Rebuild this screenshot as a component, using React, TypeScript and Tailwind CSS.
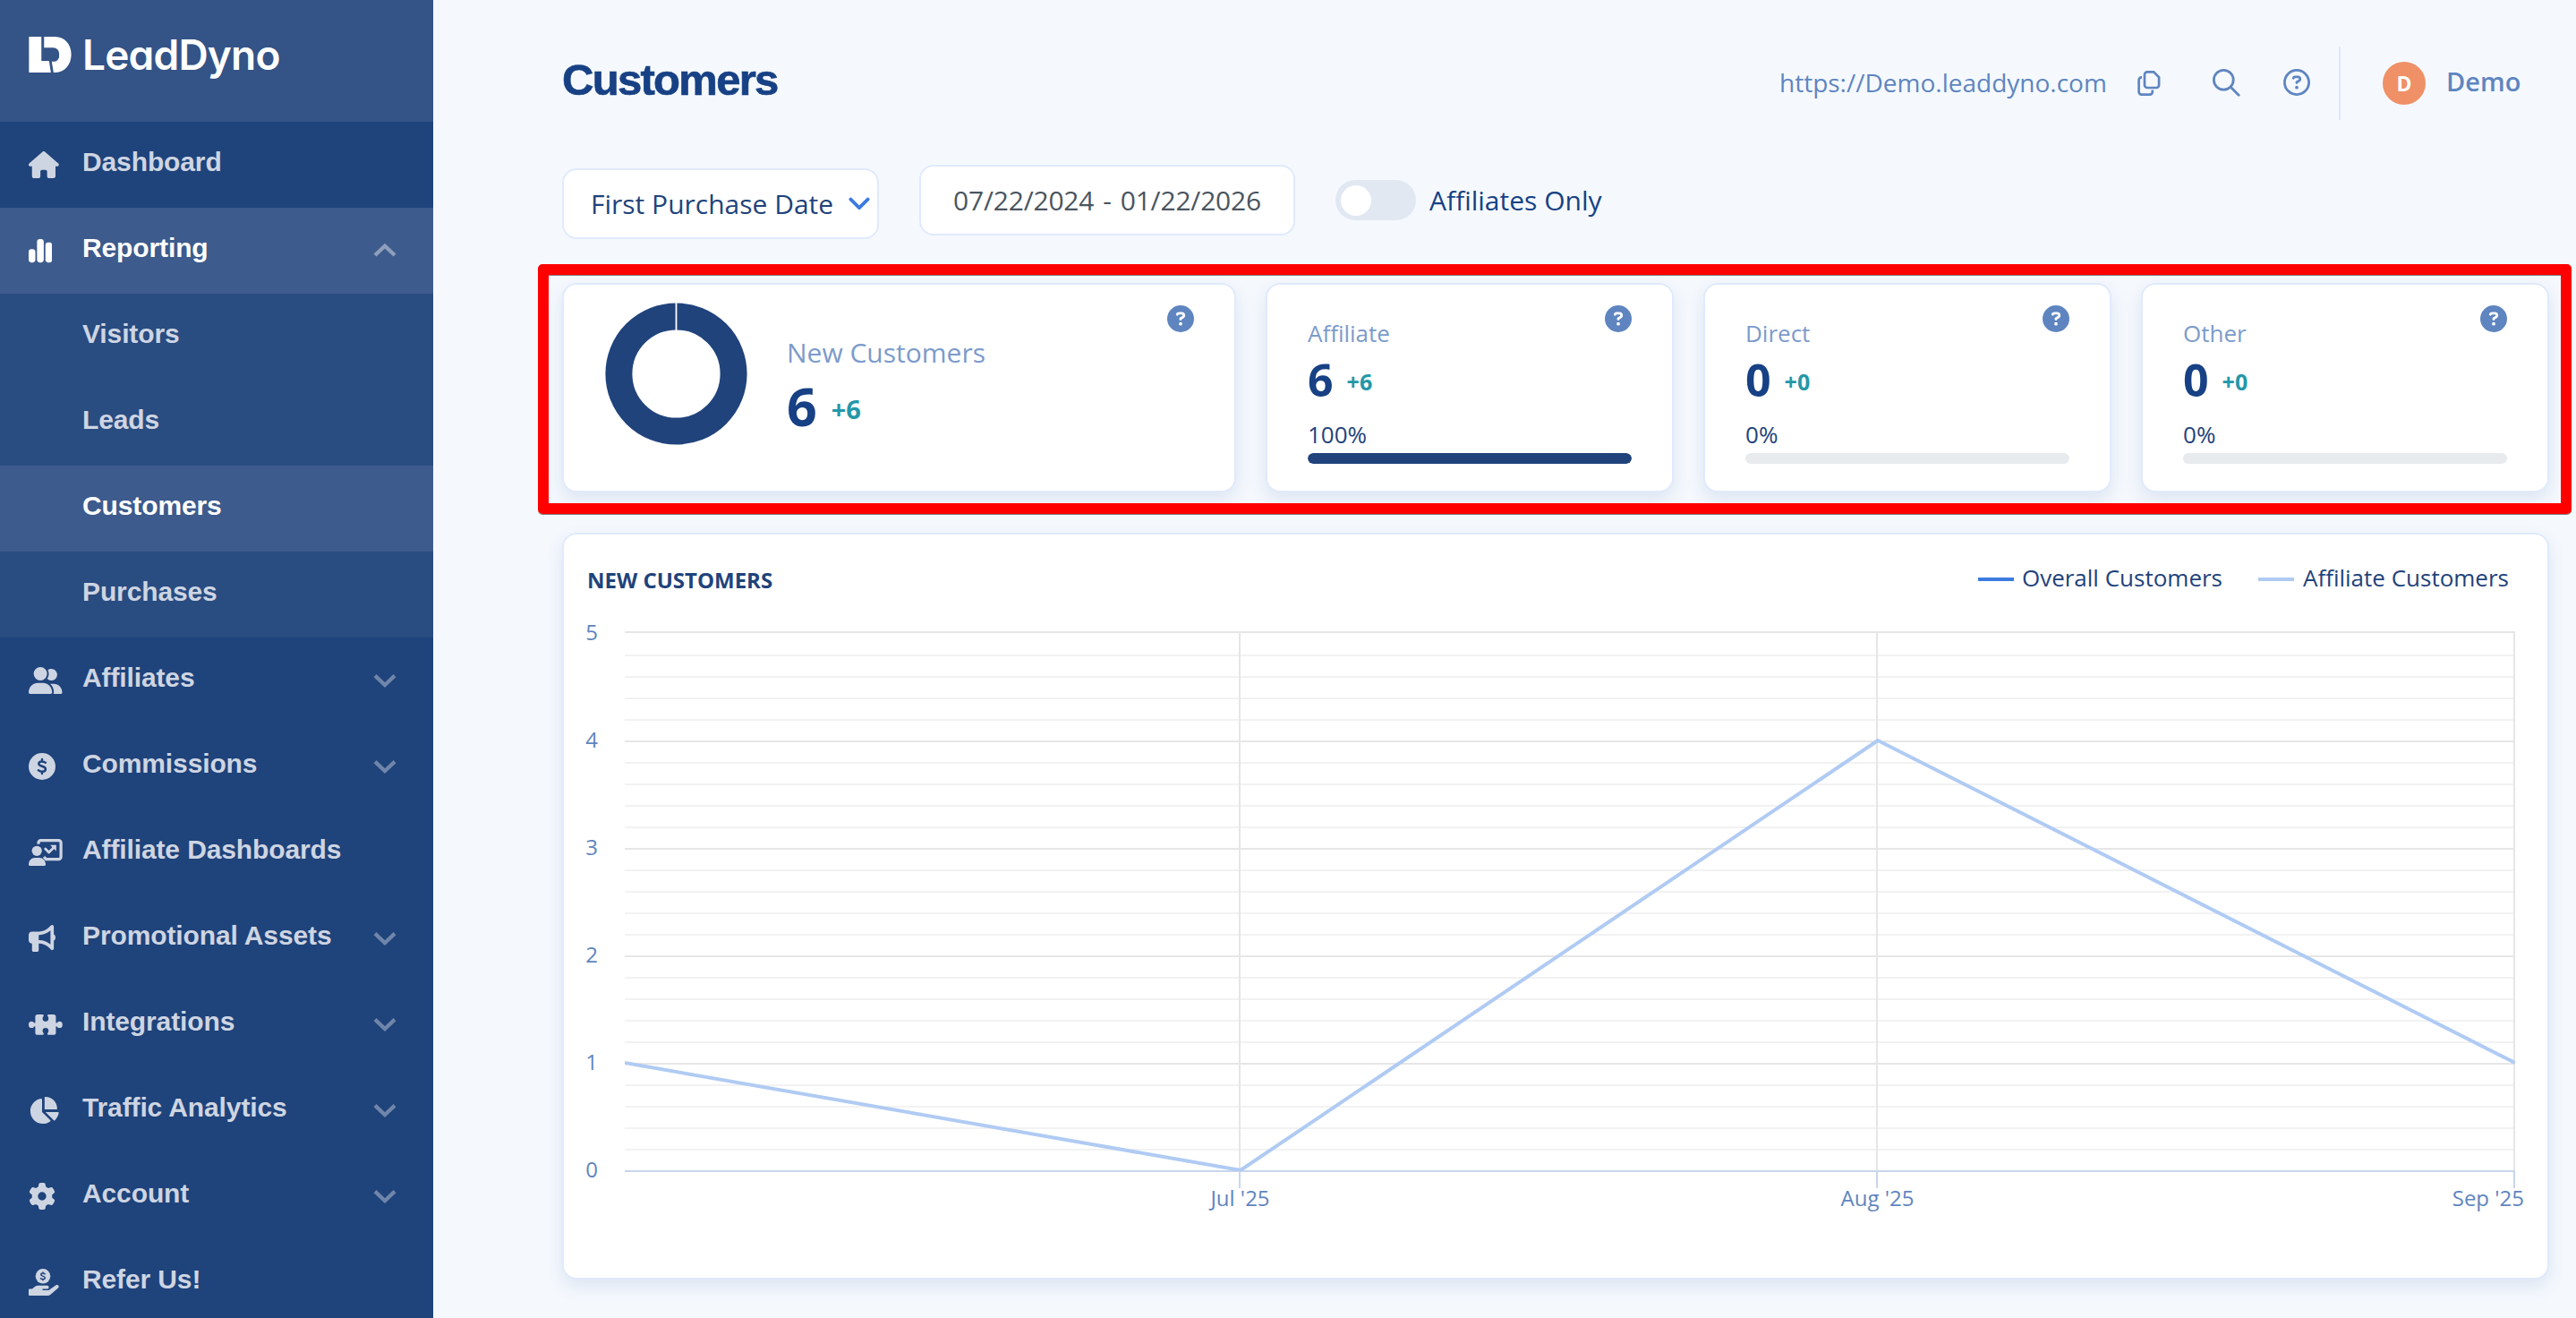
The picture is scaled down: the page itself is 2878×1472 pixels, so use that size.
import React from "react";
import {
  FaHouse,
  FaChartSimple,
  FaUserGroup,
  FaBullhorn,
  FaChartPie,
  FaGear,
  FaCircleQuestion,
  FaRegCircleQuestion,
} from "react-icons/fa6";

function LogoMark() {
  return (
    <svg className="block h-[40px] w-[48px]" viewBox="96 123 143 121" fill="#fff">
      <path d="M96 123H138V205H164L170 244H96Z" />
      <path d="M147 123H184C217 123 239 149 239 183C239 217 217 244 186 244H179L173 207H178C191 207 198 199 198 187V182C198 169 190 160 178 160H147Z" />
    </svg>
  );
}

function DollarCircleIcon() {
  return (
    <svg className="block h-[30px] w-[30px]" viewBox="0 0 30 30">
      <circle cx="15" cy="15" r="15" fill="currentColor" />
      <path
        d="M15 7V9.2M15 20.8V23M18.8 10.7C17.6 9.9 16.2 9.4 14.8 9.4C12.6 9.4 11.3 10.5 11.3 12C11.3 15.6 18.9 14 18.9 17.9C18.9 19.5 17.4 20.7 15.1 20.7C13.5 20.7 12 20.1 10.9 19.2"
        fill="none"
        stroke="#1f437b"
        strokeWidth="2.5"
        strokeLinecap="round"
      />
    </svg>
  );
}

function ScreenUserIcon() {
  return (
    <svg className="block h-[30px] w-[38px]" viewBox="0 0 38 30" fill="none">
      <circle cx="9.2" cy="13.3" r="5.6" fill="currentColor" />
      <path d="M0 28.6C0 24.4 3 21 7 21H12C16 21 19 24.4 19 28.6C19 29.5 18.5 30 17.8 30H1.2C.5 30 0 29.5 0 28.6Z" fill="currentColor" />
      <path d="M11 5.8V4.2A2.6 2.6 0 0 1 13.6 1.6H33.5A2.6 2.6 0 0 1 36.1 4.2V20A2.6 2.6 0 0 1 33.5 22.6H19.5L17 20" stroke="currentColor" strokeWidth="3.2" />
      <path d="M18.7 11L22.6 15L28.6 9" stroke="currentColor" strokeWidth="2.8" strokeLinecap="round" strokeLinejoin="round" />
      <path d="M24 6.8H30.8V13.6Z" fill="currentColor" />
    </svg>
  );
}

function PuzzleIcon() {
  return (
    <svg className="block h-[23px] w-[38px]" viewBox="0 0 38 23">
      <g fill="currentColor">
        <rect x="7.4" y="0" width="23" height="22.8" rx="2.6" />
        <ellipse cx="3.2" cy="11.4" rx="3.2" ry="3.7" />
        <ellipse cx="34.6" cy="11.4" rx="3.2" ry="3.7" />
        <rect x="3" y="9.4" width="32" height="4" />
      </g>
      <g fill="#1f437b">
        <circle cx="18.9" cy="4.6" r="3.3" />
        <circle cx="18.9" cy="18.2" r="3.3" />
        <path d="M16.2 0H21.6L20.4 3H17.4ZM16.2 23H21.6L20.4 20H17.4Z" />
      </g>
    </svg>
  );
}

function HandCoinIcon() {
  return (
    <svg className="block h-[30px] w-[34px]" viewBox="0 0 34 30">
      <circle cx="16" cy="8.3" r="8.3" fill="currentColor" />
      <path
        d="M16 3.9V5M16 11.7V12.8M18.2 5.8C17.4 5.3 16.7 5.1 15.9 5.1C14.6 5.1 13.8 5.7 13.8 6.6C13.8 8.8 18.3 7.9 18.3 10.1C18.3 11.1 17.4 11.7 16.1 11.7C15.1 11.7 14.2 11.3 13.5 10.8"
        fill="none"
        stroke="#1f437b"
        strokeWidth="1.5"
        strokeLinecap="round"
      />
      <path
        d="M0 23.8C0 23 .4 22.5 1.2 22.5H4L6.6 20.3C7.9 19.3 9.5 18.8 11.2 18.8H20.6C23.2 18.8 23.2 22.5 20.6 22.5H16C15 22.5 15 23.9 16 23.9H22.4L30.6 18.3C32.8 17 34.9 19.7 33 21.4L24.8 28.4C23.6 29.5 22.2 30 20.6 30H1.2C.4 30 0 29.6 0 28.8Z"
        fill="currentColor"
      />
    </svg>
  );
}

function Chevron({ up = false }: { up?: boolean }) {
  return (
    <svg
      className="mr-[40px] block h-[18px] w-[28px]"
      viewBox="0 0 28 18"
      fill="none"
      stroke="#fff"
      strokeOpacity={up ? 0.42 : 0.36}
      strokeWidth="4.2"
    >
      <path d={up ? "M3 14L14 3.6L25 14" : "M3 3.6L14 14L25 3.6"} />
    </svg>
  );
}

type Row = {
  label: string;
  icon?: React.ReactNode;
  chevron?: "up" | "down";
  tone?: "active" | "sub";
};

const rows: Row[] = [
  { label: "Dashboard", icon: <FaHouse className="block h-[30px] w-[33.75px]" /> },
  { label: "Reporting", icon: <FaChartSimple className="block h-[30px] w-[26.25px]" />, chevron: "up", tone: "active" },
  { label: "Visitors", tone: "sub" },
  { label: "Leads", tone: "sub" },
  { label: "Customers", tone: "active" },
  { label: "Purchases", tone: "sub" },
  { label: "Affiliates", icon: <FaUserGroup className="block h-[30px] w-[37.5px]" />, chevron: "down" },
  { label: "Commissions", icon: <DollarCircleIcon />, chevron: "down" },
  { label: "Affiliate Dashboards", icon: <ScreenUserIcon /> },
  { label: "Promotional Assets", icon: <FaBullhorn className="block h-[30px] w-[30px]" />, chevron: "down" },
  { label: "Integrations", icon: <PuzzleIcon />, chevron: "down" },
  { label: "Traffic Analytics", icon: <FaChartPie className="block h-[30px] w-[33.75px]" />, chevron: "down" },
  { label: "Account", icon: <FaGear className="block h-[30px] w-[30px]" />, chevron: "down" },
  { label: "Refer Us!", icon: <HandCoinIcon /> },
];

const tones = {
  active: "bg-[#3d5b8c] text-white",
  sub: "bg-[#294c81] text-[#ced5e2]",
  base: "text-[#ced5e2]",
};

function Sidebar() {
  return (
    <aside className="h-[1472px] w-[484px] shrink-0 overflow-hidden bg-[#1f437b]">
      <div className="flex h-[136px] items-start bg-[#345387] pt-[41px] pl-8">
        <LogoMark />
        <span className="ml-[12px] font-['Inter'] text-[46px] leading-[40px] font-semibold tracking-[-0.8px] text-white [font-feature-settings:'cv11']">
          LeadDyno
        </span>
      </div>
      <nav>
        {rows.map((r) => (
          <div
            key={r.label}
            className={`flex h-24 items-center pl-8 font-['Liberation_Sans'] text-[30px] font-bold tracking-[-0.12px] ${tones[r.tone ?? "base"]}`}
          >
            <span className="w-[60px] shrink-0">{r.icon}</span>
            <span className="flex-1 pb-[7px] whitespace-nowrap">{r.label}</span>
            {r.chevron && <Chevron up={r.chevron === "up"} />}
          </div>
        ))}
      </nav>
    </aside>
  );
}

function Header() {
  return (
    <header className="flex h-[82px] items-center justify-between">
      <h1 className="pb-[9px] font-['Liberation_Sans'] text-[49px] leading-[56px] font-bold tracking-[-1.7px] text-[#174184] [-webkit-text-stroke:0.7px_#174184]">
        Customers
      </h1>
      <div className="flex w-[860px] items-center text-[#5f85c0]">
        <span className="w-[400px] pb-[2px] text-[28px] whitespace-nowrap">https://Demo.leaddyno.com</span>
        <svg className="mb-[1px] block h-[28px] w-[26px]" viewBox="0 0 26 28" fill="none" stroke="currentColor" strokeWidth="2.7">
          <path d="M11 1.4H18.2L24.1 7.2V16A3 3 0 0 1 21.1 19H11A3 3 0 0 1 8 16V4.4A3 3 0 0 1 11 1.4Z" />
          <path d="M5 7.4H4.6A3 3 0 0 0 1.6 10.4V23.6A3 3 0 0 0 4.6 26.6H13.8A3 3 0 0 0 16.8 23.6V21.5" />
        </svg>
        <svg className="mb-[2px] ml-[58px] block h-[31px] w-[31px]" viewBox="0 0 31 31" fill="none" stroke="currentColor" strokeWidth="2.8" strokeLinecap="round">
          <circle cx="12.3" cy="12.3" r="10.9" />
          <path d="M20.2 20.2L29.2 29.2" />
        </svg>
        <FaRegCircleQuestion className="mb-[3px] ml-[48px] block h-[30px] w-[30px]" />
        <span className="ml-[32px] block h-[82px] w-[2px] bg-[#dfe9fb]" />
        <span className="ml-[47px] flex h-12 w-12 items-center justify-center rounded-full bg-[#ef9066] text-[23px] font-bold text-white">
          D
        </span>
        <span className="ml-[23px] pb-[4px] text-[29px] font-semibold">Demo</span>
      </div>
    </header>
  );
}

function Filters() {
  return (
    <div className="mt-[50px] flex h-[83px] items-start">
      <div className="mt-1 flex h-[79px] w-[354px] items-center rounded-2xl border-2 border-[#e0eafc] bg-white pl-[30px] text-[30px] whitespace-nowrap text-[#1f437b]">
        <span className="w-[288px]">First Purchase Date</span>
        <svg className="block h-[15px] w-[24px] shrink-0" viewBox="0 0 24 15" fill="none" stroke="#3b7be0" strokeWidth="3.8" strokeLinecap="round" strokeLinejoin="round">
          <path d="M2.4 2.6L12 12.2L21.6 2.6" />
        </svg>
      </div>
      <div className="ml-[45px] flex h-[79px] w-[420px] items-center justify-center rounded-2xl border-2 border-[#e0eafc] bg-white text-[30px] tracking-[-0.2px] whitespace-nowrap text-[#4a5560] [word-spacing:2.4px]">
        07/22/2024 - 01/22/2026
      </div>
      <div className="flex h-[79px] items-center">
        <span className="ml-[45px] flex h-[45px] w-[90px] items-center rounded-full bg-[#e1e8f2] pl-[6px]">
          <span className="block h-[34px] w-[34px] rounded-full bg-white" />
        </span>
        <span className="ml-[15px] text-[30px] whitespace-nowrap text-[#174184]">Affiliates Only</span>
      </div>
    </div>
  );
}

const CARD = "relative rounded-2xl border-2 border-[#e0eafc] bg-white shadow-[0_8px_20px_rgba(31,67,123,0.11)]";

function Help() {
  return <FaCircleQuestion className="absolute top-[23px] right-[45px] h-[30px] w-[30px] text-[#5f85c0]" />;
}

const sources = [
  { name: "Affiliate", value: 6, change: "+6", share: 100 },
  { name: "Direct", value: 0, change: "+0", share: 0 },
  { name: "Other", value: 0, change: "+0", share: 0 },
];

function Stats() {
  return (
    <section className="relative mt-[49px] flex h-[234px] gap-[33px]">
      <div className={`${CARD} flex w-[753px] items-start pl-[46px]`}>
        <svg className="mt-[20px] block h-[159px] w-[159px]" viewBox="0 0 159 159">
          <circle cx="79.5" cy="79.5" r="64.1" fill="none" stroke="#20437c" strokeWidth="30" />
          <path d="M79.5 0V31" stroke="#fff" strokeWidth="1.8" />
        </svg>
        <div className="ml-[44px] pt-[56px]">
          <div className="text-[30px] leading-[40px] text-[#7b9bcb]">New Customers</div>
          <div className="mt-[9px] flex items-center gap-[16px]">
            <span className="text-[59px] leading-[60px] font-bold text-[#174184]">6</span>
            <span className="pt-[7px] text-[29px] leading-[40px] font-bold text-[#2497a8]">+6</span>
          </div>
        </div>
        <Help />
      </div>
      {sources.map((s) => (
        <div key={s.name} className={`${CARD} flex-1 px-[45px] pt-[36px]`}>
          <div className="text-[26px] leading-[36px] text-[#7b9bcb]">{s.name}</div>
          <div className="mt-[9px] flex items-center gap-[15px]">
            <span className="text-[50px] leading-[50px] font-bold text-[#174184]">{s.value}</span>
            <span className="pt-[4px] text-[25px] leading-[36px] font-bold text-[#2497a8]">{s.change}</span>
          </div>
          <div className="mt-[18px] text-[26px] leading-[36px] text-[#1f437b]">{s.share}%</div>
          <div className="mt-[3px] h-[12px] overflow-hidden rounded-full bg-[#e7ebee]">
            <div className="h-full rounded-full bg-[#20437c]" style={{ width: `${s.share}%` }} />
          </div>
          <Help />
        </div>
      ))}
      <div className="absolute -top-[21px] -right-[25px] -bottom-[24px] -left-[27px] z-10 rounded-[5px] border-[12px] border-[#ff0000] shadow-[0_1px_0_rgba(60,60,60,0.65),inset_0_1px_0_rgba(60,60,60,0.65)]" />
    </section>
  );
}

const BASE_Y = 1308;
const TOP_Y = 706;
const UNIT = 120;
const LEFT = 698;
const RIGHT = 2810;
const toY = (v: number) => Math.round(BASE_Y - v * UNIT);
const minor = Array.from({ length: 25 }, (_, i) => (i + 1) / 5).filter((v) => v % 1 !== 0);
const points: [number, number][] = [
  [698, 1],
  [1386, 0],
  [2098, 4],
  [2810, 1],
];
const months = [
  { label: "Jul '25", x: 1385, tx: 1385.5, anchor: "middle" as const },
  { label: "Aug '25", x: 2097, tx: 2097.5, anchor: "middle" as const },
  { label: "Sep '25", x: 2809, tx: 2820, anchor: "end" as const },
];

function Chart() {
  return (
    <section className={`${CARD} mt-[45px] h-[834px]`}>
      <div className="flex h-[100px] items-center justify-between pr-[43px] pl-[26px]">
        <h2 className="pt-[1px] text-[24px] font-bold text-[#1f437b]">NEW CUSTOMERS</h2>
        <div className="flex items-center text-[26px] text-[#1f437b]">
          <span className="block h-1 w-10 bg-[#3b7be0]" />
          <span className="ml-[9px] pb-[4px]">Overall Customers</span>
          <span className="ml-[40px] block h-1 w-10 bg-[#b0cbf3]" />
          <span className="ml-[10px] pb-[4px]">Affiliate Customers</span>
        </div>
      </div>
      <svg className="block h-[730px] w-[2216px] overflow-visible" viewBox="630 697 2216 730" fontFamily="Open Sans" fontSize="24" fill="#5f85c0">
        {minor.map((v) => (
          <path key={v} d={`M${LEFT} ${toY(v)}H${RIGHT}`} stroke="#f2f2f2" strokeWidth="2" />
        ))}
        {months.map((m) => (
          <path key={m.label} d={`M${m.x} ${TOP_Y - 1}V${BASE_Y}`} stroke="#e6e6e6" strokeWidth="2" />
        ))}
        {[1, 2, 3, 4].map((v) => (
          <path key={v} d={`M${LEFT} ${toY(v)}H${RIGHT}`} stroke="#e6e6e6" strokeWidth="2" />
        ))}
        <path d={`M${LEFT} ${TOP_Y}H${RIGHT}`} stroke="#e6e6e6" strokeWidth="2" />
        <path d={`M${LEFT} ${BASE_Y}H${RIGHT}`} stroke="#c9d6eb" strokeWidth="2" />
        {months.map((m) => (
          <path key={m.label} d={`M${m.x} ${BASE_Y}V1327`} stroke="#c9d6eb" strokeWidth="2" />
        ))}
        <clipPath id="plot">
          <rect x={LEFT} y="700" width={RIGHT - LEFT} height="608" />
        </clipPath>
        <polyline
          points={points.map(([x, v]) => `${x},${BASE_Y - 1 - v * UNIT}`).join(" ")}
          fill="none"
          stroke="#b0cbf3"
          strokeWidth="4"
          strokeLinejoin="round"
          clipPath="url(#plot)"
        />
        {[0, 1, 2, 3, 4, 5].map((v) => (
          <text key={v} x="668" y={toY(v) + 7} textAnchor="end">
            {v}
          </text>
        ))}
        {months.map((m) => (
          <text key={m.label} x={m.tx} y="1347" textAnchor={m.anchor}>
            {m.label}
          </text>
        ))}
      </svg>
    </section>
  );
}

export default function App() {
  return (
    <div className="flex h-[1472px] w-[2878px] overflow-hidden bg-[#f5f9fe] font-['Open_Sans',sans-serif]">
      <Sidebar />
      <main className="flex-1 pt-[52px] pr-[30px] pl-[144px]">
        <Header />
        <Filters />
        <Stats />
        <Chart />
      </main>
    </div>
  );
}
